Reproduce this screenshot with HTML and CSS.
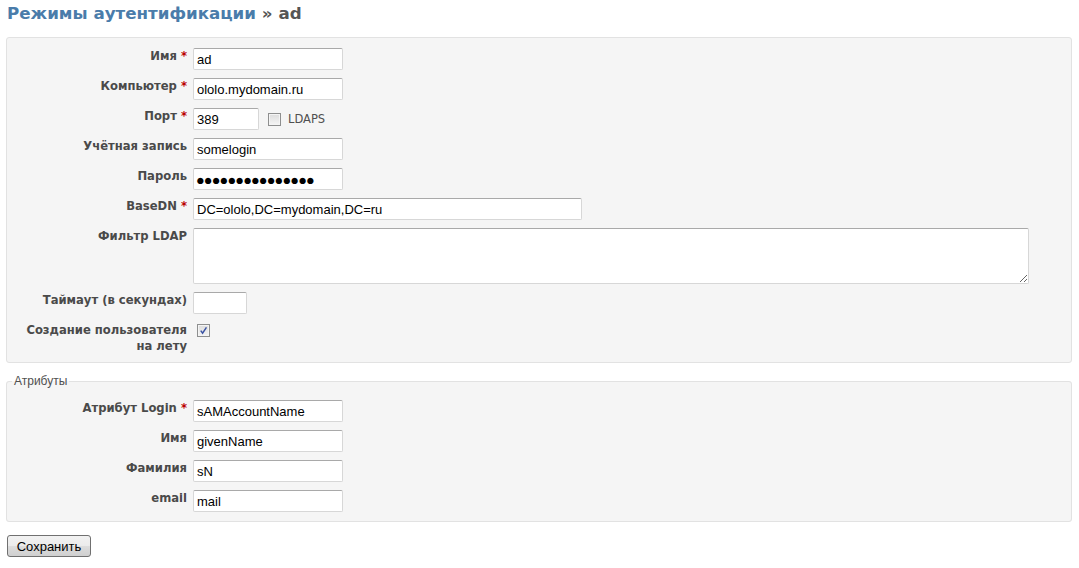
FILE: index.html
```html
<!DOCTYPE html>
<html lang="ru">
<head>
<meta charset="utf-8">
<title>Режимы аутентификации » ad</title>
<link rel="stylesheet" href="styles.css">
</head>
<body>
<div class="page">
  <h2 class="title"><a class="crumb" href="#">Режимы аутентификации</a> » ad</h2>

  <form class="form">
    <div class="box">
      <div class="row">
        <label class="lbl">Имя <span class="req">*</span></label>
        <div class="field"><input class="inp w150" type="text" value="ad"></div>
      </div>
      <div class="row">
        <label class="lbl">Компьютер <span class="req">*</span></label>
        <div class="field"><input class="inp w150" type="text" value="ololo.mydomain.ru"></div>
      </div>
      <div class="row">
        <label class="lbl">Порт <span class="req">*</span></label>
        <div class="field port">
          <input class="inp w66" type="text" value="389">
          <span class="cb"></span>
          <span class="cb-label">LDAPS</span>
        </div>
      </div>
      <div class="row">
        <label class="lbl">Учётная запись</label>
        <div class="field"><input class="inp w150" type="text" value="somelogin"></div>
      </div>
      <div class="row">
        <label class="lbl">Пароль</label>
        <div class="field"><input class="inp w150 pwd" type="text" value="●●●●●●●●●●●●●●●"></div>
      </div>
      <div class="row">
        <label class="lbl">BaseDN <span class="req">*</span></label>
        <div class="field"><input class="inp w389" type="text" value="DC=ololo,DC=mydomain,DC=ru"></div>
      </div>
      <div class="row">
        <label class="lbl">Фильтр LDAP</label>
        <div class="field"><textarea class="inp ta"></textarea></div>
      </div>
      <div class="row">
        <label class="lbl">Таймаут (в секундах)</label>
        <div class="field"><input class="inp w54" type="text" value=""></div>
      </div>
      <div class="row">
        <label class="lbl">Создание пользователя<br>на лету</label>
        <div class="field">
          <span class="cb checked"><svg viewBox="0 0 12 12" width="12" height="12"><path d="M3 6.2 L5 9 L9.2 2.6" fill="none" stroke="#3a53a4" stroke-width="1.6"/></svg></span>
        </div>
      </div>
    </div>

    <fieldset class="box attrs">
      <legend class="legend">Атрибуты</legend>
      <div class="row">
        <label class="lbl">Атрибут Login <span class="req">*</span></label>
        <div class="field"><input class="inp w150" type="text" value="sAMAccountName"></div>
      </div>
      <div class="row">
        <label class="lbl">Имя</label>
        <div class="field"><input class="inp w150" type="text" value="givenName"></div>
      </div>
      <div class="row">
        <label class="lbl">Фамилия</label>
        <div class="field"><input class="inp w150" type="text" value="sN"></div>
      </div>
      <div class="row">
        <label class="lbl">email</label>
        <div class="field"><input class="inp w150" type="text" value="mail"></div>
      </div>
    </fieldset>

    <div class="actions">
      <button class="btn" type="button">Сохранить</button>
    </div>
  </form>
</div>
</body>
</html>
```

FILE: styles.css
```css
html, body {
  margin: 0;
  padding: 0;
  background: #ffffff;
}

body {
  font-family: "DejaVu Sans", Verdana, sans-serif;
  font-size: 11px;
  color: #505050;
}

.page {
  padding: 0 7px 0 6px;
}

.title {
  margin: 0;
  height: 37px;
  padding-top: 1px;
  box-sizing: border-box;
  font-size: 16.7px;
  line-height: 24px;
  font-weight: bold;
  color: #555555;
  padding-left: 1px;
}

.crumb {
  color: #4a7caa;
  text-decoration: none;
}

.box {
  background: #f5f5f5;
  border: 1px solid #e2e2e2;
  border-radius: 3px;
  padding: 10px 0 8px 0;
  display: flex;
  flex-direction: column;
  gap: 8px;
}

.row {
  display: grid;
  grid-template-columns: 180px 1fr;
  column-gap: 6px;
  align-items: start;
}

.lbl {
  text-align: right;
  font-weight: bold;
  font-size: 11.6px;
  line-height: 16px;
  color: #4a4a4a;
  padding-top: 0;
  white-space: nowrap;
}

.req {
  color: #bb0000;
}

.field {
  display: flex;
  align-items: center;
  min-height: 16px;
}

.inp {
  box-sizing: border-box;
  height: 22px;
  margin: 0;
  padding: 1px 3px 0 3px;
  border: 1px solid #d7d7d7;
  border-top-color: #a9a9a9;
  border-radius: 2px;
  background: #ffffff;
  font-family: "Liberation Sans", Arial, sans-serif;
  font-size: 13px;
  color: #000000;
  outline: none;
}

.w150 { width: 150px; }
.w66 { width: 66px; }
.w54 { width: 54px; }
.w389 { width: 389px; }

.pwd {
  font-size: 14.5px;
  letter-spacing: -0.9px;
  padding-left: 2px;
}

.ta {
  width: 836px;
  height: 56px;
  resize: both;
}

.port .cb {
  margin-left: 9px;
}

.cb {
  box-sizing: border-box;
  display: inline-block;
  width: 13px;
  height: 13px;
  border: 1px solid #8e8f8f;
  background: linear-gradient(#dcdcdc, #f5f5f5);
  box-shadow: inset 0 0 0 1px #f4f4f4;
}

.cb svg {
  display: block;
  width: 11px;
  height: 11px;
}

.cb.checked {
  margin-left: 4px;
  margin-top: 1px;
}

.cb-label {
  margin-left: 7px;
  font-size: 11.5px;
  color: #505050;
}

.attrs {
  margin: 12px 0 0 0;
  padding: 12px 0 9px 0;
  min-width: 0;
}

.legend {
  margin-left: 5px;
  padding: 0 2px;
  line-height: 13px;
  color: #505050;
  font-family: "Liberation Sans", Arial, sans-serif;
  font-size: 12px;
}

.actions {
  margin-top: 13px;
  padding-left: 1px;
}

.btn {
  box-sizing: border-box;
  width: 84px;
  height: 22px;
  padding: 0;
  border: 1px solid #707070;
  border-radius: 3px;
  background: linear-gradient(#f2f2f2 0%, #ebebeb 50%, #dddddd 51%, #cfcfcf 100%);
  font-family: "Liberation Sans", Arial, sans-serif;
  font-size: 13px;
  color: #000000;
}
```
